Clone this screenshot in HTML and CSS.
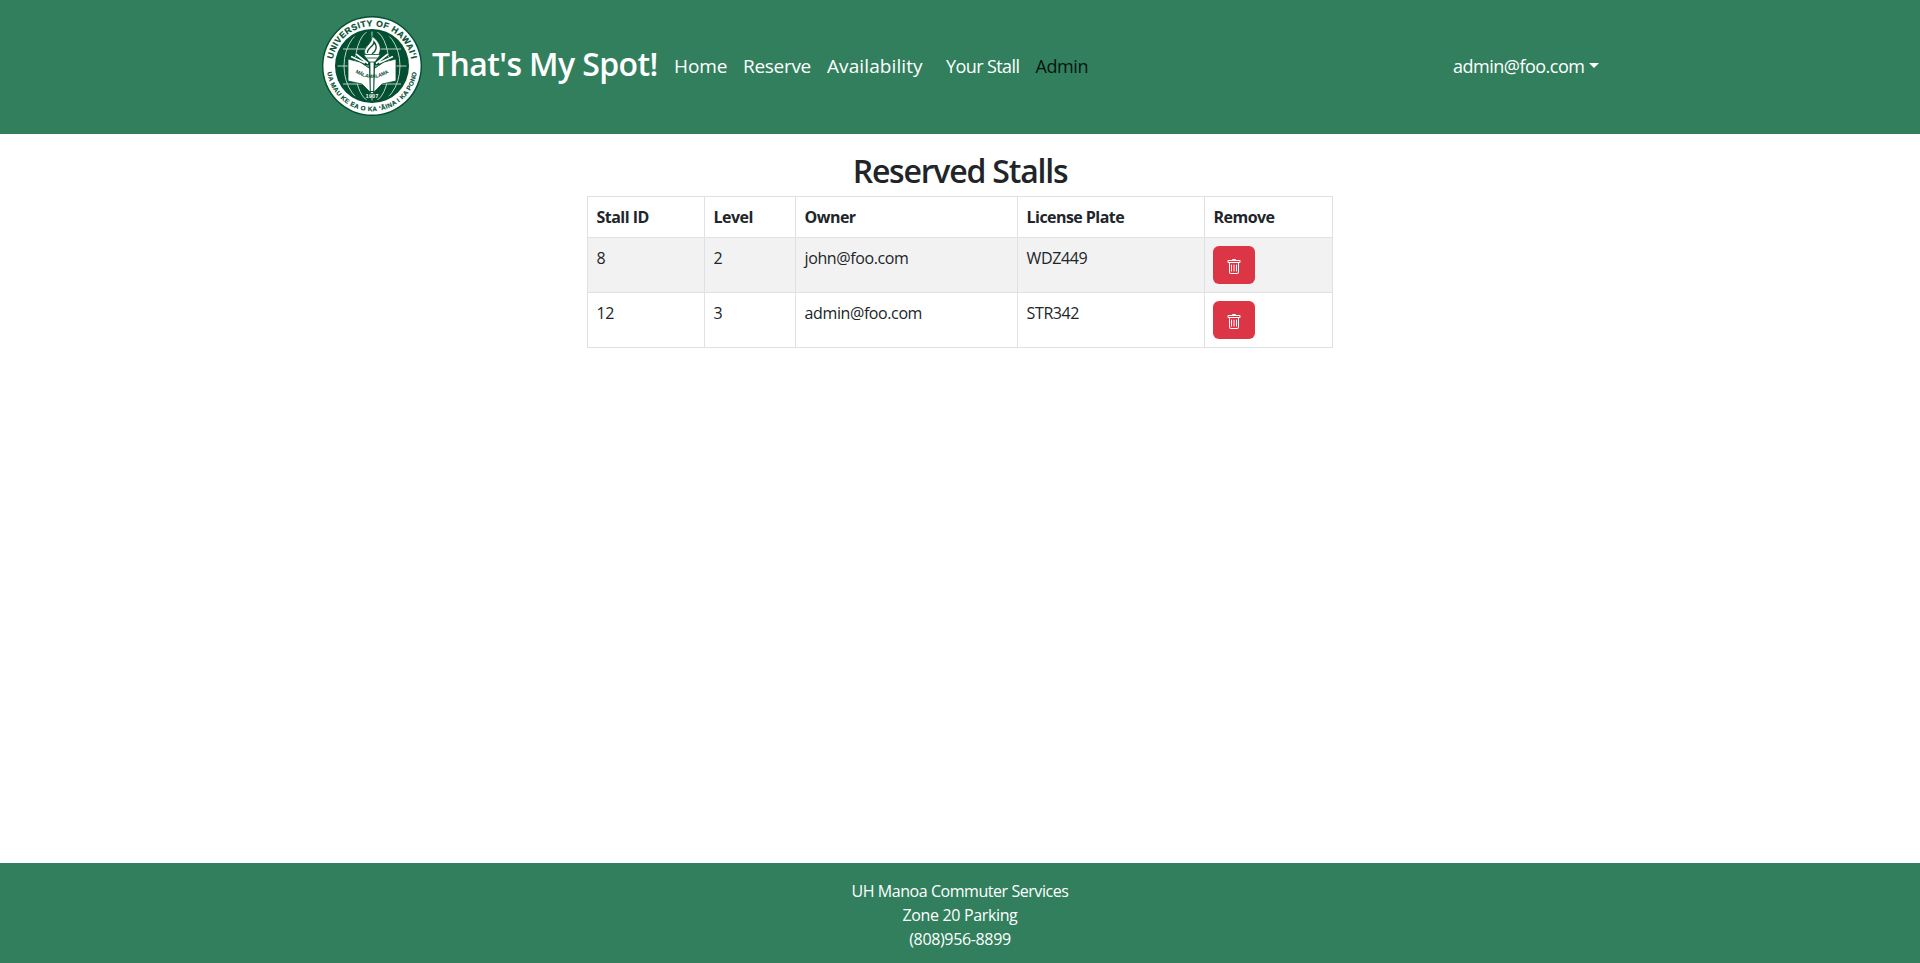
FILE: index.html
```html
<!DOCTYPE html>
<html lang="en">
<head>
<meta charset="utf-8">
<title>That's My Spot!</title>
<link rel="stylesheet" href="styles.css">
</head>
<body>
<header class="navbar">
  <div class="container">
    <svg class="logo" viewBox="0 0 100 100" role="img" aria-label="University of Hawaii seal">
      <defs>
        <path id="arc-top" d="M10.2 50A39.8 39.8 0 0 1 89.8 50"/>
        <path id="arc-bottom" d="M4.8 50A45.2 45.2 0 0 0 95.2 50"/>
        <path id="arc-book" d="M31 55Q50 69 69 55"/>
        <clipPath id="globe"><circle cx="50" cy="50" r="34.5"/></clipPath>
      </defs>
      <circle cx="50" cy="50" r="50" fill="#024f31"/>
      <circle cx="50" cy="50" r="48.6" fill="#fff"/>
      <circle cx="50" cy="50" r="37" fill="#024f31"/>
      <g clip-path="url(#globe)" fill="none" stroke="#bcd3c9" stroke-width="1">
        <path d="M13 50H87M21 33H79M21 68H79M50 14V86"/>
        <ellipse cx="50" cy="50" rx="17" ry="36"/>
        <ellipse cx="50" cy="50" rx="28" ry="38"/>
      </g>
      <path d="M26 43 38 46 50 54 62 46 74 43V65L60 68 50 78 40 68 26 65Z" fill="#fff" stroke="#024f31" stroke-width=".8"/>
      <path d="M29 40.5 43 47M34 38 46 47.5M71 40.5 57 47M66 38 54 47.5" stroke="#024f31" stroke-width="3"/>
      <path d="M29 40.5 43 47M34 38 46 47.5M71 40.5 57 47M66 38 54 47.5" stroke="#fff" stroke-width="1.7"/>
      <path d="M46.8 44H53.2L52.2 76H47.8Z" fill="#024f31"/>
      <path d="M48.3 45H51.7L51.2 75H48.8Z" fill="#fff"/>
      <path d="M43 38C40 31 51 28 50 20C58 26 60 32 57 38L55 41H45Z" fill="#fff" stroke="#024f31" stroke-width=".8"/>
      <path d="M45.5 37C44.5 32 52 31 52 26C56 31 54 35 50 38" fill="none" stroke="#024f31" stroke-width="1.3"/>
      <path d="M41.5 38.5H58.5L55.5 42.5 53 46H47L44.5 42.5Z" fill="#fff" stroke="#024f31" stroke-width=".8"/>
      <path d="M44.5 42H55.5" stroke="#024f31" stroke-width=".8"/>
      <text class="seal-top"><textPath href="#arc-top" startOffset="50%" textLength="111">UNIVERSITY OF HAWAIʻI</textPath></text>
      <text class="seal-bottom"><textPath href="#arc-bottom" startOffset="50%" textLength="129">UA MAU KE EA O KA ʻĀINA I KA PONO</textPath></text>
      <text class="seal-book"><textPath href="#arc-book" startOffset="50%" textLength="36">MĀLAMALAMA</textPath></text>
      <text class="seal-year" x="50" y="82.3" textLength="12.5">1907</text>
    </svg>
    <h2 class="brand">That's My Spot!</h2>
    <nav class="nav">
      <a class="link home">Home</a>
      <a class="link reserve">Reserve</a>
      <a class="link availability">Availability</a>
      <a class="link stall">Your Stall</a>
      <a class="link admin">Admin</a>
    </nav>
    <a class="user"><span class="user-name">admin@foo.com</span><span class="caret"></span></a>
  </div>
</header>
<main class="main">
  <h2 class="title">Reserved Stalls</h2>
  <table class="stalls">
    <colgroup><col class="c1"><col class="c2"><col class="c3"><col class="c4"><col class="c5"></colgroup>
    <thead><tr><th>Stall ID</th><th>Level</th><th>Owner</th><th>License Plate</th><th>Remove</th></tr></thead>
    <tbody>
      <tr class="striped"><td>8</td><td>2</td><td>john@foo.com</td><td>WDZ449</td><td><button class="remove" aria-label="Remove"><svg class="trash" viewBox="0 0 16 16"><path d="M5.5 5.5A.5.5 0 0 1 6 6v6a.5.5 0 0 1-1 0V6a.5.5 0 0 1 .5-.5m2.5 0a.5.5 0 0 1 .5.5v6a.5.5 0 0 1-1 0V6a.5.5 0 0 1 .5-.5m3 .5a.5.5 0 0 0-1 0v6a.5.5 0 0 0 1 0z"/><path d="M14.5 3a1 1 0 0 1-1 1H13v9a2 2 0 0 1-2 2H5a2 2 0 0 1-2-2V4h-.5a1 1 0 0 1-1-1V2a1 1 0 0 1 1-1H6a1 1 0 0 1 1-1h2a1 1 0 0 1 1 1h3.5a1 1 0 0 1 1 1zM4.118 4 4 4.059V13a1 1 0 0 0 1 1h6a1 1 0 0 0 1-1V4.059L11.882 4zM2.5 3h11V2h-11z"/></svg></button></td></tr>
      <tr><td>12</td><td>3</td><td>admin@foo.com</td><td>STR342</td><td><button class="remove" aria-label="Remove"><svg class="trash" viewBox="0 0 16 16"><path d="M5.5 5.5A.5.5 0 0 1 6 6v6a.5.5 0 0 1-1 0V6a.5.5 0 0 1 .5-.5m2.5 0a.5.5 0 0 1 .5.5v6a.5.5 0 0 1-1 0V6a.5.5 0 0 1 .5-.5m3 .5a.5.5 0 0 0-1 0v6a.5.5 0 0 0 1 0z"/><path d="M14.5 3a1 1 0 0 1-1 1H13v9a2 2 0 0 1-2 2H5a2 2 0 0 1-2-2V4h-.5a1 1 0 0 1-1-1V2a1 1 0 0 1 1-1H6a1 1 0 0 1 1-1h2a1 1 0 0 1 1 1h3.5a1 1 0 0 1 1 1zM4.118 4 4 4.059V13a1 1 0 0 0 1 1h6a1 1 0 0 0 1-1V4.059L11.882 4zM2.5 3h11V2h-11z"/></svg></button></td></tr>
    </tbody>
  </table>
</main>
<footer class="footer">
  <div class="service">UH Manoa Commuter Services</div>
  <div>Zone 20 Parking</div>
  <div>(808)956-8899</div>
</footer>
</body>
</html>
```
FILE: styles.css
```css
* { box-sizing: border-box; }
body {
  margin: 0;
  min-height: 963px;
  display: flex;
  flex-direction: column;
  background: #fff;
  color: #212529;
  font-family: "Segoe UI", "Open Sans", "Noto Sans", sans-serif;
  font-size: 16px;
  line-height: 24px;
}
.navbar { height: 134px; padding-top: 16px; background: #327f5e; color: #fff; }
.container { width: 1296px; margin: 0 auto; padding-left: 10px; display: flex; align-items: flex-start; }
.logo { width: 100px; height: 100px; flex: none; }
.seal-top, .seal-bottom, .seal-book, .seal-year { font-family: "Liberation Sans", sans-serif; font-weight: 700; text-anchor: middle; fill: #024f31; }
.seal-top { font-size: 8.6px; stroke: #024f31; stroke-width: .2px; }
.seal-bottom { font-size: 6.3px; stroke: #024f31; stroke-width: .15px; }
.seal-book { font-size: 5px; }
.seal-year { font-size: 5px; fill: #fff; }
.brand { margin: 28px 0 0 10px; width: 242px; font-size: 32px; line-height: 40px; font-weight: 600; letter-spacing: -0.6px; white-space: nowrap; }
.nav { display: flex; margin-top: 35px; }
.link { white-space: nowrap; line-height: 30px; font-size: 18px; }
.home { width: 69px; font-size: 19px; letter-spacing: -0.1px; }
.reserve { width: 84px; font-size: 19px; letter-spacing: -0.3px; }
.availability { width: 119px; font-size: 19px; letter-spacing: 0.1px; }
.stall { width: 89.5px; letter-spacing: -0.6px; }
.admin { color: #06150e; letter-spacing: -0.4px; }
.user { margin: 35px 8px 0 auto; width: 147px; display: flex; align-items: center; line-height: 30px; font-size: 18px; letter-spacing: -0.5px; }
.user-name { width: 136px; }
.caret { flex: none; margin-top: -2px; border-top: 5.4px solid #fff; border-left: 5.4px solid transparent; border-right: 5.4px solid transparent; }
.main { flex: 1; display: flex; flex-direction: column; align-items: center; padding-top: 17px; }
.title { margin: 0 0 5px; font-size: 32px; line-height: 40px; font-weight: 600; letter-spacing: -1.2px; }
.stalls { width: 746px; table-layout: fixed; border-collapse: collapse; letter-spacing: -0.4px; }
.c1 { width: 117px; }
.c2 { width: 91px; }
.c3 { width: 222px; }
.c4 { width: 187px; }
.c5 { width: 128px; }
.stalls th, .stalls td { padding: 8px 8px 8px 8.6px; border: 1px solid #dee2e6; text-align: left; vertical-align: top; }
.stalls th { font-weight: 700; letter-spacing: -0.55px; }
.striped { background: #f2f2f2; }
.remove { display: block; width: 42px; height: 38px; margin-left: -0.6px; padding: 0; border: 0; border-radius: 6px; background: #dc3545; }
.trash { display: block; width: 16px; height: 16px; margin: 3px auto 0; fill: #fff; }
.footer { height: 100px; padding-top: 16px; background: #327f5e; color: #fff; text-align: center; letter-spacing: -0.35px; }
.service { letter-spacing: -0.45px; }
```
